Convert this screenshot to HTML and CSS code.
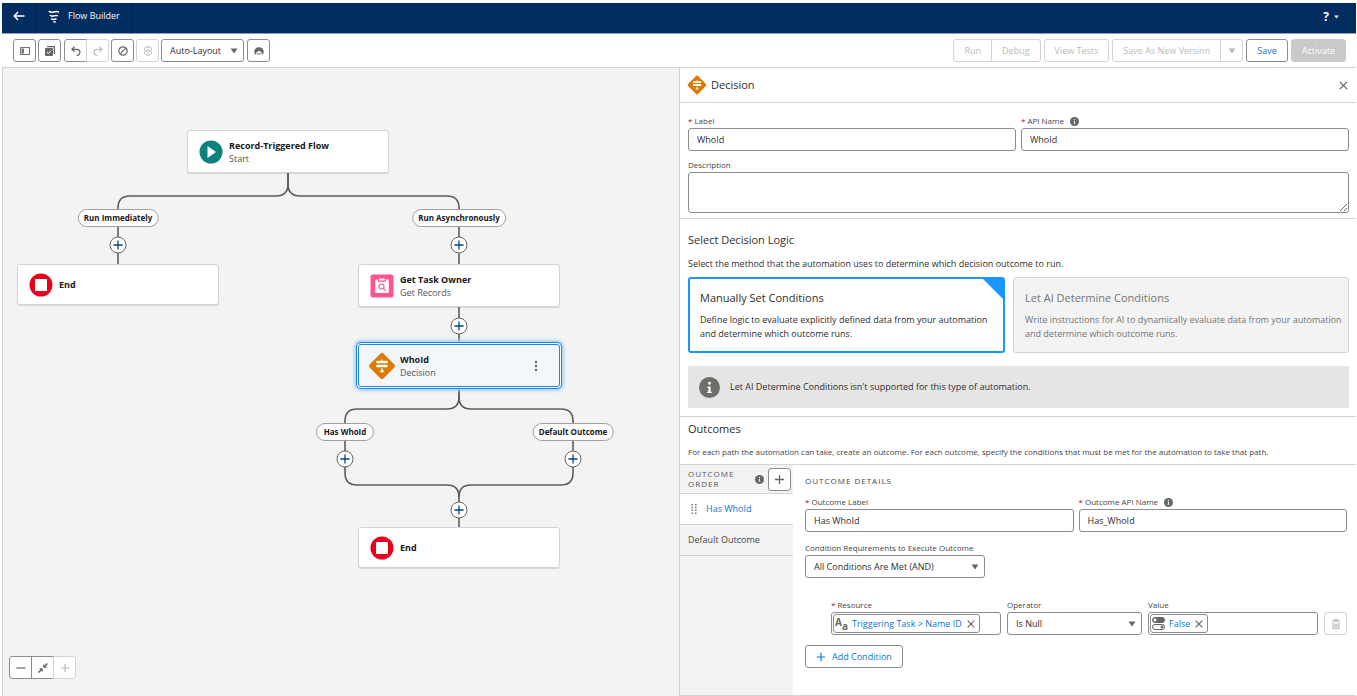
FILE: index.html
```
<!DOCTYPE html>
<html lang="en">
<head>
    <meta charset="UTF-8">
    <meta name="viewport" content="width=device-width, initial-scale=1.0">
    <title>Flow Builder</title>
    <link rel="stylesheet" href="styles.css">
</head>
<body>
    <!-- shared icons -->
    <svg class="sprite" aria-hidden="true">
        <symbol id="plus" viewBox="0 0 12 12"><path d="M6 1v10M1 6h10" fill="none" stroke="currentColor" stroke-width="1.4"/></symbol>
        <symbol id="close" viewBox="0 0 12 12"><path d="M2 2l8 8M10 2l-8 8" fill="none" stroke="currentColor" stroke-width="1.4"/></symbol>
        <symbol id="caret" viewBox="0 0 8 6"><path d="M0.5 0.5h7L4 5.5z" fill="currentColor"/></symbol>
        <symbol id="info" viewBox="0 0 20 20">
            <circle cx="10" cy="10" r="10" fill="currentColor"/>
            <path d="M8 9h3v5h1.2v1.2H7.8V14H9v-3.8H8z" fill="#fff"/>
            <circle cx="10" cy="6" r="1.4" fill="#fff"/>
        </symbol>
        <symbol id="decision" viewBox="0 0 28 28">
            <rect x="4.2" y="4.2" width="19.6" height="19.6" rx="2" fill="#dd7a01" transform="rotate(45 14 14)"/>
            <path d="M9 8.700h10q0.800 0 0.800 0.800v1q0 0.800-0.800 0.800H9L7.800 10z" fill="#fff"/>
            <path d="M19 12.700H9q-0.800 0-0.800 0.800v1q0 0.800 0.800 0.800h10l1.200-1.300z" fill="#fff"/>
            <path d="M13.300 7.500h1.400v1.500h-1.400zM13.300 16.300h1.400v1.400l1.800 2.600h-5l1.800-2.600z" fill="#fff"/>
        </symbol>
        <symbol id="end" viewBox="0 0 24 24">
            <circle cx="12" cy="12" r="11.500" fill="#ea001e"/>
            <rect x="6" y="6" width="12" height="12" rx="0.500" fill="#fff"/>
        </symbol>
    </svg>

    <header class="topbar">
        <a href="#" class="back" aria-label="Back">
            <svg width="12" height="10" viewBox="0 0 12 10"><path d="M5 1L1.200 5 5 9M1.200 5H11.500" fill="none" stroke="#fff" stroke-width="1.500"/></svg>
        </a>
        <div class="app-name">
            <svg width="12" height="13" viewBox="0 0 12 13" fill="none" stroke="#fff" stroke-width="1.500">
                <path d="M0.800 1c1.600 1.700 3.400 1.500 5 1s3.500-0.800 5.200 0.300"/>
                <path d="M1.800 5c1.400 1.400 2.800 1.300 4.200 0.900s2.600-0.700 3.800-0.100"/>
                <path d="M3.300 8.600c1 0.900 2 0.900 2.900 0.700s1.600-0.500 2.400-0.200"/>
                <path d="M5.300 11.500c0.800 0.600 1.500 0.600 2.400 0.200"/>
            </svg>
            <span>Flow Builder</span>
        </div>
        <button class="help" aria-label="Help">? <svg width="5" height="4"><use href="#caret"/></svg></button>
    </header>

    <div class="toolbar">
        <button class="btn icon" aria-label="Toggle toolbox">
            <svg width="10" height="8" viewBox="0 0 10 8"><rect x="0.500" y="0.500" width="9" height="7" fill="none" stroke="#747474"/><rect x="1.500" y="1.500" width="2.500" height="5" fill="#747474"/></svg>
        </button>
        <button class="btn icon" aria-label="Select elements">
            <svg width="10" height="10" viewBox="0 0 10 10"><path d="M2 0.600h7.400V8" fill="none" stroke="#666" stroke-width="1.200"/><rect x="0" y="2" width="8" height="8" rx="1" fill="#666"/><path d="M2 6l1.500 1.500L6.200 4.500" fill="none" stroke="#fff"/></svg>
        </button>
        <div class="btn-group">
            <button class="btn icon" aria-label="Undo">
                <svg width="10" height="10" viewBox="0 0 10 10"><path d="M3.500 0.800L1 3.300l2.500 2.500M1 3.300h5c4 0 4 6-0.500 6" fill="none" stroke="#666" stroke-width="1.300"/></svg>
            </button>
            <button class="btn icon" aria-label="Redo" disabled>
                <svg width="10" height="10" viewBox="0 0 10 10"><path d="M6.500 0.800L9 3.300l-2.500 2.500M9 3.300H4c-4 0-4 6 0.500 6" fill="none" stroke="currentColor" stroke-width="1.200"/></svg>
            </button>
        </div>
        <button class="btn icon" aria-label="Errors">
            <svg width="10" height="10" viewBox="0 0 10 10"><circle cx="5" cy="5" r="4.200" fill="none" stroke="#666" stroke-width="1.200"/><path d="M2.200 7.800l5.600-5.600" stroke="#666" stroke-width="1.200"/></svg>
        </button>
        <button class="btn icon" aria-label="Settings" disabled>
            <svg width="10" height="10" viewBox="0 0 10 10" fill="none" stroke="currentColor"><path d="M4 0.600h2l0.300 1.300 1.300-0.500 1.400 1.800-1 0.900v1.800l1 0.900-1.400 1.800-1.300-0.500L6 9.400H4l-0.300-1.300-1.300 0.500L1 6.800l1-0.900V4.100l-1-0.900 1.400-1.800 1.300 0.500z"/><circle cx="5" cy="5" r="1.400"/></svg>
        </button>
        <div class="select layout-select">
            <select aria-label="Layout">
                <option>Auto-Layout</option>
                <option>Free-Form</option>
            </select>
            <svg width="8" height="6"><use href="#caret"/></svg>
        </div>
        <button class="btn icon" aria-label="Agent">
            <svg width="10" height="8" viewBox="0 0 10 8"><path d="M0.300 5C0.300 2 2.300 0.300 5 0.300S9.700 2 9.700 5c0 1.600-0.800 2.700-2 2.700V5.500L5 3.800 2.300 5.500v2.200c-1.200 0-2-1.100-2-2.700z" fill="#666"/><path d="M3.300 6.900h3.400" stroke="#666"/></svg>
        </button>

        <div class="actions">
            <div class="btn-group">
                <button class="btn" disabled>Run</button>
                <button class="btn" disabled>Debug</button>
            </div>
            <button class="btn" disabled>View Tests</button>
            <div class="btn-group">
                <button class="btn" disabled>Save As New Version</button>
                <button class="btn icon" aria-label="More save options" disabled><svg width="8" height="6"><use href="#caret"/></svg></button>
            </div>
            <button class="btn save">Save</button>
            <button class="btn activate" disabled>Activate</button>
        </div>
    </div>

    <main class="builder">
        <section class="canvas" aria-label="Flow canvas">
            <svg class="connectors" width="678" height="520" fill="none" stroke="#5c5c5c" stroke-width="1.600">
                <path d="M286 104v12q0 12-12 12H128q-12 0-12 12v57"/>
                <path d="M286 104v12q0 12 12 12h147q12 0 12 12v182"/>
                <path d="M457 320v9q0 12-12 12h-90q-12 0-12 12v52q0 12 12 12h90q12 0 12 12v31"/>
                <path d="M457 320v9q0 12 12 12h90q12 0 12 12v52q0 12-12 12h-90q-12 0-12 12"/>
            </svg>

            <div class="node start">
                <svg width="24" height="24" viewBox="0 0 24 24"><circle cx="12" cy="12" r="11.500" fill="#0b827c"/><path d="M8.500 6v12l8.500-6z" fill="#fff"/></svg>
                <div class="node-text"><strong>Record-Triggered Flow</strong><span>Start</span></div>
            </div>
            <span class="pill immediate">Run Immediately</span>
            <span class="pill async">Run Asynchronously</span>
            <button class="add add-immediate" aria-label="Add element"><svg width="11" height="11"><use href="#plus"/></svg></button>
            <button class="add add-async" aria-label="Add element"><svg width="11" height="11"><use href="#plus"/></svg></button>

            <div class="node end-left">
                <svg width="24" height="24"><use href="#end"/></svg>
                <div class="node-text"><strong>End</strong></div>
            </div>
            <div class="node get-records">
                <svg width="24" height="24" viewBox="0 0 24 24"><rect x="0.500" y="0.500" width="23" height="23" rx="2.500" fill="#ff538a"/><path d="M6 5.500h2v2.200h8V5.500h2a0.800 0.800 0 0 1 0.800 0.800v12a0.800 0.800 0 0 1-0.800 0.800H6a0.800 0.800 0 0 1-0.800-0.800v-12A0.800 0.800 0 0 1 6 5.500zM9.200 4.500h5.600v2H9.200z" fill="#fff"/><circle cx="11.500" cy="12.500" r="2.500" fill="none" stroke="#ff538a" stroke-width="1.100"/><path d="M13.300 14.300l2.400 2.400" stroke="#ff538a" stroke-width="1.200"/></svg>
                <div class="node-text"><strong>Get Task Owner</strong><span>Get Records</span></div>
            </div>
            <button class="add add-get" aria-label="Add element"><svg width="11" height="11"><use href="#plus"/></svg></button>

            <div class="node decision selected">
                <svg class="diamond" width="28" height="28"><use href="#decision"/></svg>
                <div class="node-text"><strong>WhoId</strong><span>Decision</span></div>
                <button class="more" aria-label="Element actions"><svg width="4" height="12" viewBox="0 0 4 12" fill="#666"><circle cx="2" cy="2" r="1.200"/><circle cx="2" cy="6" r="1.200"/><circle cx="2" cy="10" r="1.200"/></svg></button>
            </div>
            <span class="pill has-whoid">Has WhoId</span>
            <span class="pill default-outcome">Default Outcome</span>
            <button class="add add-whoid" aria-label="Add element"><svg width="11" height="11"><use href="#plus"/></svg></button>
            <button class="add add-default" aria-label="Add element"><svg width="11" height="11"><use href="#plus"/></svg></button>
            <button class="add add-merge" aria-label="Add element"><svg width="11" height="11"><use href="#plus"/></svg></button>
            <div class="node end-right">
                <svg width="24" height="24"><use href="#end"/></svg>
                <div class="node-text"><strong>End</strong></div>
            </div>

            <div class="btn-group zoom">
                <button class="btn icon" aria-label="Zoom out"><svg width="10" height="10" viewBox="0 0 10 10"><path d="M0.500 5h9" stroke="#666" stroke-width="1.200"/></svg></button>
                <button class="btn icon" aria-label="Zoom to fit"><svg width="10" height="10" viewBox="0 0 10 10"><path d="M5.300 4.700V1l1.300 1.300L8.900 0l1.100 1.100-2.300 2.300L9 4.700zM4.700 5.300H1l1.300 1.300L0 8.900 1.100 10l2.300-2.300L4.700 9z" fill="#666"/></svg></button>
                <button class="btn icon" aria-label="Zoom in" disabled><svg width="10" height="10"><use href="#plus"/></svg></button>
            </div>
        </section>

        <form class="panel">
            <div class="panel-header">
                <svg width="20" height="20"><use href="#decision"/></svg>
                <h2>Decision</h2>
                <button type="button" class="close" aria-label="Close"><svg width="11" height="11"><use href="#close"/></svg></button>
            </div>

            <div class="details">
                <div class="row">
                    <div class="field">
                        <label for="label"><i>*</i>Label</label>
                        <input type="text" id="label" value="WhoId">
                    </div>
                    <div class="field">
                        <label for="api-name"><i>*</i>API Name <svg class="hint" width="9" height="9"><use href="#info"/></svg></label>
                        <input type="text" id="api-name" value="WhoId">
                    </div>
                </div>
                <div class="field">
                    <label for="description">Description</label>
                    <textarea id="description"></textarea>
                </div>
            </div>

            <div class="logic">
                <h3>Select Decision Logic</h3>
                <p>Select the method that the automation uses to determine which decision outcome to run.</p>
                <div class="cards">
                    <label class="card checked">
                        <input type="radio" name="logic" checked>
                        <span class="card-title">Manually Set Conditions</span>
                        <span class="card-text">Define logic to evaluate explicitly defined data from your automation and determine which outcome runs.</span>
                    </label>
                    <label class="card">
                        <input type="radio" name="logic" disabled>
                        <span class="card-title">Let AI Determine Conditions</span>
                        <span class="card-text">Write instructions for AI to dynamically evaluate data from your automation and determine which outcome runs.</span>
                    </label>
                </div>
                <div class="notice">
                    <svg width="21" height="21"><use href="#info"/></svg>
                    <span>Let AI Determine Conditions isn't supported for this type of automation.</span>
                </div>
            </div>

            <div class="outcomes-intro">
                <h3>Outcomes</h3>
                <p>For each path the automation can take, create an outcome. For each outcome, specify the conditions that must be met for the automation to take that path.</p>
            </div>

            <div class="outcomes">
                <nav class="order">
                    <div class="order-header">
                        <span>OUTCOME ORDER</span>
                        <svg class="hint" width="9" height="9"><use href="#info"/></svg>
                        <button type="button" class="btn icon" aria-label="Add outcome"><svg width="11" height="11"><use href="#plus"/></svg></button>
                    </div>
                    <a href="#" class="active">
                        <svg width="6" height="10" viewBox="0 0 6 10" fill="#747474"><path d="M0.500 0h1.500v1.500H0.500zM4 0h1.500v1.500H4zM0.500 2.800h1.500v1.500H0.500zM4 2.800h1.500v1.500H4zM0.500 5.600h1.500v1.500H0.500zM4 5.600h1.500v1.500H4zM0.500 8.400h1.500v1.500H0.500zM4 8.400h1.500v1.500H4z"/></svg>
                        Has WhoId
                    </a>
                    <a href="#">Default Outcome</a>
                </nav>

                <div class="outcome">
                    <h4>OUTCOME DETAILS</h4>
                    <div class="row">
                        <div class="field">
                            <label for="outcome-label"><i>*</i>Outcome Label</label>
                            <input type="text" id="outcome-label" value="Has WhoId">
                        </div>
                        <div class="field">
                            <label for="outcome-api"><i>*</i>Outcome API Name <svg class="hint" width="9" height="9"><use href="#info"/></svg></label>
                            <input type="text" id="outcome-api" value="Has_WhoId">
                        </div>
                    </div>
                    <div class="field requirement">
                        <label for="requirement">Condition Requirements to Execute Outcome</label>
                        <div class="select">
                            <select id="requirement">
                                <option>All Conditions Are Met (AND)</option>
                                <option>Any Condition Is Met (OR)</option>
                            </select>
                            <svg width="8" height="6"><use href="#caret"/></svg>
                        </div>
                    </div>
                    <div class="condition">
                        <div class="field">
                            <label for="resource"><i>*</i> Resource</label>
                            <div class="combo">
                                <span class="token">
                                    <span class="text-type" aria-hidden="true"><b>A</b><b>a</b></span>
                                    <a href="#">Triggering Task &gt; Name ID</a>
                                    <button type="button" aria-label="Remove"><svg width="10" height="10"><use href="#close"/></svg></button>
                                </span>
                                <input type="text" id="resource">
                            </div>
                        </div>
                        <div class="field">
                            <label for="operator">Operator</label>
                            <div class="select">
                                <select id="operator"><option>Is Null</option><option>Equals</option></select>
                                <svg width="8" height="6"><use href="#caret"/></svg>
                            </div>
                        </div>
                        <div class="field">
                            <label for="value">Value</label>
                            <div class="combo">
                                <span class="token">
                                    <svg width="13" height="13" viewBox="0 0 13 13"><rect x="0.500" y="0.500" width="12" height="5" rx="2.500" fill="#666" stroke="#666"/><circle cx="3" cy="3" r="1.400" fill="#fff"/><rect x="0.500" y="7.500" width="12" height="5" rx="2.500" fill="#fff" stroke="#666"/><circle cx="10" cy="10" r="1.400" fill="#666"/></svg>
                                    <a href="#">False</a>
                                    <button type="button" aria-label="Remove"><svg width="10" height="10"><use href="#close"/></svg></button>
                                </span>
                                <input type="text" id="value">
                            </div>
                        </div>
                        <button type="button" class="btn icon" aria-label="Delete condition" disabled>
                            <svg width="8" height="10" viewBox="0 0 8 10" fill="none" stroke="currentColor" stroke-width="1.200"><path d="M0 2.200h8M2.500 2V0.600h3V2M1.200 3.800v5.600h5.600V3.800M3.200 4.500v3.500M4.800 4.500v3.500"/></svg>
                        </button>
                    </div>
                    <button type="button" class="btn add-condition"><svg width="10" height="10"><use href="#plus"/></svg>Add Condition</button>
                </div>
            </div>
        </form>
    </main>
</body>
</html>
```

FILE: styles.css
```
* {
    box-sizing: border-box;
}

body {
    margin: 0;
    padding: 3px 1px 0 2px;
    height: 100vh;
    display: flex;
    flex-direction: column;
    font-family: "Open Sans", "Noto Sans", sans-serif;
    font-size: 9px;
    line-height: 14px;
    color: #2e2e2e;
    background: #fff;
}

button,
input,
select,
textarea {
    font: inherit;
    color: inherit;
}

button {
    cursor: pointer;
}

a {
    color: #0b76d8;
    text-decoration: none;
}

svg {
    display: block;
    flex: none;
}

h2,
h3,
h4,
p {
    margin: 0;
    font-weight: normal;
}

.sprite {
    position: absolute;
    width: 0;
    height: 0;
}

/* top bar */
.topbar {
    display: flex;
    height: 31px;
    flex: none;
    background: #032d60;
    border-bottom: 1px solid #8c9db5;
    color: #fff;
}

.back {
    display: flex;
    align-items: center;
    padding: 0 11px 4px;
    border-right: 1px dotted #011f45;
}

.app-name {
    display: flex;
    align-items: center;
    gap: 8px;
    padding: 0 11px 4px;
    border-right: 1px dotted #011f45;
}

.help {
    display: flex;
    align-items: center;
    gap: 5px;
    margin-left: auto;
    padding: 0 17px 2px;
    border: 0;
    background: none;
    font-size: 12px;
    font-weight: bold;
}

/* toolbar */
.toolbar {
    display: flex;
    flex: none;
    gap: 2px;
    padding: 5px 10px 5px 11px;
    border-bottom: 1px solid #d4d4d4;
}

.btn {
    display: flex;
    align-items: center;
    justify-content: center;
    height: 23px;
    padding: 0 10px;
    border: 1px solid #8c8c8c;
    border-radius: 3px;
    background: #fff;
    white-space: nowrap;
}

.btn.icon {
    width: 23px;
    padding: 0;
    color: #666;
}

.btn:disabled {
    border-color: #d4d4d4;
    color: #bababa;
}

.btn-group {
    display: flex;
}

.btn-group .btn + .btn {
    margin-left: -1px;
    border-top-left-radius: 0;
    border-bottom-left-radius: 0;
}

.btn-group .btn:not(:last-child) {
    border-top-right-radius: 0;
    border-bottom-right-radius: 0;
}

.actions {
    display: flex;
    gap: 3px;
    margin-left: auto;
}

.btn.save {
    color: #0b76d8;
}

.btn.activate {
    background: #c9c9c9;
    border-color: #c9c9c9;
    color: #fff;
}

.toolbar > .btn-group {
    margin-left: 1px;
}

.select {
    position: relative;
}

.select select {
    width: 100%;
    height: 23px;
    padding: 0 24px 0 8px;
    border: 1px solid #8c8c8c;
    border-radius: 3px;
    background: #fff;
    appearance: none;
}

.select svg {
    position: absolute;
    right: 6px;
    top: 9px;
    color: #666;
    pointer-events: none;
}

.layout-select {
    width: 83px;
    margin-right: 1px;
}

.layout-select select {
    padding-right: 14px;
}

/* canvas */
.builder {
    display: flex;
    flex: 1;
    min-height: 0;
}

.canvas {
    position: relative;
    flex: 1;
    overflow: hidden;
    background: #f3f3f3;
    border-left: 1px solid #d4d4d4;
}

.connectors {
    position: absolute;
    left: -1px;
    top: 0;
}

.node {
    position: absolute;
    display: flex;
    align-items: center;
    gap: 6px;
    width: 202px;
    height: 43px;
    padding: 0 11px;
    background: #fff;
    border: 1px solid #d4d4d4;
    border-radius: 3px;
    box-shadow: 0 1px 1px rgba(0, 0, 0, 0.12);
}

.node-text {
    display: flex;
    flex-direction: column;
    line-height: 13px;
    color: #555;
}

.node-text strong {
    color: #181818;
}

.node.selected {
    background: #f3f7fb;
    border: 1px solid #1b87e6;
    box-shadow: 0 0 0 1px #fff, 0 0 0 2px #1b87e6, 0 0 3px 4px #a9d2f8;
}

.diamond {
    margin: 0 -2px;
}

.more {
    margin-left: auto;
    padding: 4px 10px;
    border: 0;
    background: none;
}

.start { left: 184px; top: 62px; }
.end-left { left: 14px; top: 196px; height: 41px; }
.get-records { left: 355px; top: 196px; }
.decision { left: 355px; top: 276px; height: 43px; }
.end-right { left: 355px; top: 459px; height: 41px; }

.pill,
.add {
    position: absolute;
    transform: translate(-50%, -50%);
}

.pill {
    min-width: 58px;
    padding: 0 5px;
    border: 1px solid #a0a0a0;
    border-radius: 9px;
    background: #fff;
    color: #181818;
    font-size: 8px;
    font-weight: bold;
    line-height: 16px;
    text-align: center;
    white-space: nowrap;
}

.immediate { left: 115px; top: 150px; }
.async { left: 456px; top: 150px; }
.has-whoid { left: 342px; top: 364px; }
.default-outcome { left: 570px; top: 364px; }

.add {
    display: flex;
    align-items: center;
    justify-content: center;
    width: 17px;
    height: 17px;
    padding: 0;
    border: 1px solid #666;
    border-radius: 50%;
    background: #fff;
    color: #014486;
}

.add-immediate { left: 115px; top: 177px; }
.add-async { left: 456px; top: 177px; }
.add-get { left: 456px; top: 258px; }
.add-whoid { left: 342px; top: 391px; }
.add-default { left: 570px; top: 391px; }
.add-merge { left: 456px; top: 442px; }

.zoom {
    position: absolute;
    left: 6px;
    bottom: 17px;
}

/* property panel */
.panel {
    width: 50%;
    display: flex;
    flex-direction: column;
    border-left: 1px solid #d4d4d4;
    border-bottom: 1px solid #d4d4d4;
}

.panel-header {
    display: flex;
    align-items: center;
    gap: 4px;
    height: 35px;
    padding: 0 7px;
    border-bottom: 1px solid #d4d4d4;
}

h2,
h3,
.card-title {
    font-size: 11px;
    line-height: 16px;
}

.close {
    margin-left: auto;
    padding: 0;
    border: 0;
    background: none;
    color: #666;
}

.details {
    padding: 11px 7px 5px 8px;
    border-bottom: 1px solid #d4d4d4;
}

.row {
    display: flex;
    gap: 5px;
}

.field {
    flex: 1;
    min-width: 0;
}

.field label {
    display: flex;
    align-items: center;
    gap: 2px;
    font-size: 8px;
    line-height: 14px;
    color: #444;
}

.field label i {
    color: #ba0517;
    font-style: normal;
}

.hint {
    margin-left: 4px;
    color: #666;
}

.field > input,
textarea {
    display: block;
    width: 100%;
    height: 23px;
    padding: 0 8px;
    border: 1px solid #8c8c8c;
    border-radius: 3px;
    background: #fff;
}

.details .row {
    margin-bottom: 7px;
}

textarea {
    height: 41px;
    resize: vertical;
}

.logic {
    padding: 13px 7px 8px 8px;
    border-bottom: 1px solid #d4d4d4;
}

.logic h3 {
    margin-bottom: 9px;
}

.cards {
    display: grid;
    grid-template-columns: 317fr 336fr;
    gap: 8px;
    margin: 6px 0 13px;
}

.card {
    position: relative;
    min-width: 0;
    height: 76px;
    padding: 12px 2px 12px 11px;
    border: 1px solid #d4d4d4;
    border-radius: 3px;
    background: #f3f3f3;
    color: #747474;
}

.card input {
    position: absolute;
    opacity: 0;
}

.card-title,
.card-text {
    display: block;
}

.card-title {
    margin-bottom: 7px;
}

.card.checked {
    padding: 11px 10px;
    border: 2px solid #1b96ff;
    background: #fff;
    color: #2e2e2e;
}

/* selected corner */
.card.checked::after {
    content: "";
    position: absolute;
    right: 0;
    top: 0;
    border: 10px solid #1b96ff;
    border-left-color: transparent;
    border-bottom-color: transparent;
}

.notice {
    display: flex;
    align-items: center;
    gap: 10px;
    height: 42px;
    padding: 0 11px;
    background: #e5e5e5;
}

.notice svg {
    color: #706e6b;
}

.outcomes-intro {
    padding: 4px 8px 5px;
    border-bottom: 1px solid #d4d4d4;
}

.outcomes-intro h3 {
    margin-bottom: 8px;
}

.outcomes-intro p {
    font-size: 8px;
    color: #444;
}

.outcomes {
    display: flex;
    flex: 1;
}

.order {
    width: 113px;
    background: #f3f3f3;
}

.order-header {
    display: flex;
    align-items: center;
    height: 29px;
    padding: 0 2px 0 8px;
    border-bottom: 1px solid #d4d4d4;
    font-size: 8px;
    line-height: 10px;
    letter-spacing: 1px;
    color: #555;
}

.order-header span {
    flex: 1;
}

.order-header .btn {
    margin-left: 4px;
}

.order a {
    display: flex;
    align-items: center;
    gap: 9px;
    height: 31px;
    padding: 0 8px;
    border-bottom: 1px solid #d4d4d4;
    color: #444;
}

.order a.active {
    padding-left: 11px;
    background: #fff;
    color: #0b76d8;
}

.outcome {
    flex: 1;
    padding: 9px 9px 0 12px;
    min-width: 0;
}

h4 {
    margin-bottom: 7px;
    font-size: 8px;
    letter-spacing: 1px;
    color: #444;
}

.requirement {
    width: 180px;
    margin: 9px 0 20px;
}

.condition {
    display: flex;
    align-items: flex-end;
    gap: 6px;
    margin: 0 0 10px 26px;
}

.condition .field {
    flex: 170;
}

.condition .field:nth-child(2) {
    flex: 135;
}

.combo {
    display: flex;
    height: 23px;
    padding: 1px;
    border: 1px solid #8c8c8c;
    border-radius: 3px;
}

.combo > input {
    flex: 1;
    width: 0;
    border: 0;
    outline: 0;
}

.token {
    display: flex;
    align-items: center;
    gap: 4px;
    padding: 0 3px 0 1px;
    border: 1px solid #8c8c8c;
    border-radius: 3px;
    white-space: nowrap;
}

.token button {
    padding: 0;
    border: 0;
    background: none;
    color: #666;
}

.text-type {
    display: flex;
    align-items: center;
    font-size: 10px;
    line-height: 12px;
    color: #666;
}

.text-type b:first-child {
    padding-bottom: 4px;
}

.text-type b:last-child {
    padding-top: 4px;
}

.add-condition {
    gap: 6px;
    color: #0b76d8;
}
```
